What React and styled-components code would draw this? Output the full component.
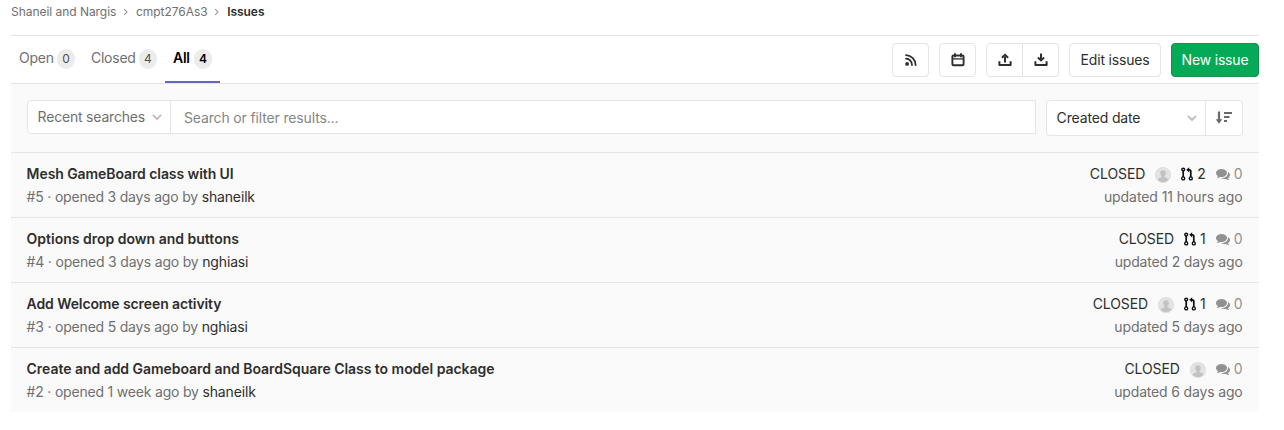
import React from 'react';
import styled, { createGlobalStyle } from 'styled-components';

const GlobalStyle = createGlobalStyle`
  * { box-sizing: border-box; }
  body {
    margin: 0;
    background: #fff;
    color: #2e2e2e;
    font-family: Inter, "Liberation Sans", sans-serif;
    font-size: 14px;
    line-height: 20px;
    -webkit-font-smoothing: antialiased;
  }
  svg { display: block; flex: none; }
`;

const Page = styled.main`
  width: 1248px;
  margin-left: 11px;
`;

const Breadcrumbs = styled.nav`
  display: flex;
  align-items: center;
  height: 36px;
  padding-bottom: 12px;
  border-bottom: 1px solid #e5e5e5;
  font-size: 12px;
  letter-spacing: -0.04px;
  color: #707070;
`;

const Crumb = styled.span`
  font-weight: ${(p) => (p.$current ? 600 : 400)};
  color: ${(p) => (p.$current ? '#2e2e2e' : 'inherit')};
`;

const CrumbArrow = styled.svg`
  margin: 0 7px 0 6.6px;
`;

const TopBar = styled.div`
  display: flex;
  justify-content: space-between;
  height: 48px;
  border-bottom: 1px solid #e5e5e5;
`;

const Tabs = styled.div`
  display: flex;
`;

const Tab = styled.div`
  display: flex;
  align-items: center;
  justify-content: space-between;
  height: 47px;
  width: ${(p) => p.$width}px;
  padding: 0 8px 3px;
  white-space: nowrap;
  letter-spacing: -0.25px;
  font-weight: ${(p) => (p.$active ? 600 : 400)};
  color: ${(p) => (p.$active ? '#000' : '#707070')};
  box-shadow: ${(p) => (p.$active ? 'inset 0 -2px 0 #6666c4' : 'none')};
`;

const Count = styled.span`
  width: 18px;
  height: 20px;
  border-radius: 10px;
  margin-top: 2px;
  background: #ececec;
  color: ${(p) => (p.$active ? '#000' : '#505050')};
  font-size: 12px;
  letter-spacing: 0;
  text-align: center;
`;

const Actions = styled.div`
  display: flex;
  gap: 10px;
  padding-top: 7px;
`;

const Button = styled.button`
  display: flex;
  align-items: center;
  justify-content: center;
  width: ${(p) => p.$width}px;
  height: 34px;
  padding: 0;
  border: 1px solid ${(p) => (p.$primary ? '#168f48' : '#e5e5e5')};
  border-radius: 4px;
  background: ${(p) => (p.$primary ? '#05aa57' : '#fff')};
  color: ${(p) => (p.$primary ? '#fff' : '#2e2e2e')};
  font: inherit;
  letter-spacing: -0.19px;
`;

const ButtonGroup = styled.div`
  display: flex;
  ${Button}:first-child { border-radius: 4px 0 0 4px; }
  ${Button}:last-child { border-radius: 0 4px 4px 0; border-left: 0; }
`;

const Panel = styled.section`
  background: #fafafa;
`;

const Filters = styled.div`
  display: flex;
  align-items: flex-start;
  gap: 10px;
  height: 68px;
  padding: 16px 16px 0;
`;

const SearchBox = styled.div`
  display: flex;
  flex: 1;
  height: 34px;
  border: 1px solid #e5e5e5;
  border-radius: 4px 0 0 4px;
  background: #fff;
`;

const Recent = styled.div`
  display: flex;
  align-items: center;
  justify-content: space-between;
  width: 143px;
  padding: 0 8px 0 9.6px;
  border-right: 1px solid #e5e5e5;
  color: #707070;
  letter-spacing: -0.2px;
  white-space: nowrap;
`;

const Placeholder = styled.div`
  padding: 7px 13px;
  color: #868686;
  letter-spacing: -0.15px;
`;

const Sort = styled.div`
  display: flex;
  width: 197px;
  height: 36px;
  border: 1px solid #e5e5e5;
  border-radius: 4px;
  background: #fff;
`;

const SortField = styled.div`
  display: flex;
  align-items: center;
  justify-content: space-between;
  flex: 1;
  padding: 0 8px 0 9.6px;
  letter-spacing: -0.15px;
`;

const SortDirection = styled.div`
  display: flex;
  align-items: center;
  justify-content: center;
  width: 37px;
  border-left: 1px solid #e5e5e5;
`;

const Issue = styled.article`
  display: flex;
  justify-content: space-between;
  height: 65px;
  padding: 11px 16.4px 0 15.6px;
  border-top: 1px solid #e5e5e5;
`;

const Line = styled.div`
  height: 23px;
  white-space: nowrap;
`;

const Title = styled(Line)`
  font-weight: 600;
  letter-spacing: ${(p) => p.$spacing}px;
`;

const Muted = styled(Line)`
  color: #707070;
  letter-spacing: -0.2px;
`;

const Updated = styled(Line)`
  color: #707070;
  text-align: right;
  letter-spacing: ${(p) => p.$spacing}px;
`;

const Author = styled.span`
  color: #2e2e2e;
  letter-spacing: -0.15px;
`;

const Meta = styled.div`
  display: flex;
  align-items: center;
  justify-content: flex-end;
  gap: 10px;
  height: 20px;
  margin-bottom: 3px;
`;

const Status = styled.span`
  letter-spacing: -0.1px;
`;

const Stat = styled.span`
  display: flex;
  align-items: center;
  gap: 4px;
  color: ${(p) => (p.$faint ? '#919191' : '#2e2e2e')};
`;

const AvatarImage = styled.svg`
  margin-top: 2px;
`;

const Chevron = () => (
  <svg width="10" height="8" viewBox="0 0 10 8" fill="none" stroke="#bfbfbf" strokeWidth="1.9" strokeLinecap="round" strokeLinejoin="round">
    <path d="M1.4 2.400 5 6 8.600 2.400" />
  </svg>
);

const Separator = () => (
  <CrumbArrow width="6" height="8" viewBox="0 0 6 8" fill="none" stroke="#999" strokeWidth="1.1">
    <path d="M1.2 1.2 4 4 1.2 6.8" />
  </CrumbArrow>
);

const RssIcon = () => (
  <svg width="16" height="16" viewBox="0 0 16 16" fill="none" stroke="#2e2e2e" strokeWidth="1.8">
    <circle cx="4.1" cy="11.9" r="1.9" fill="#2e2e2e" stroke="none" />
    <path d="M3 6.6A6.100 6.100 0 0 1 9 13M3 3.100A9.900 9.900 0 0 1 12.600 13" strokeLinecap="round" />
  </svg>
);

const CalendarIcon = () => (
  <svg width="16" height="16" viewBox="0 0 16 16" fill="none" stroke="#2e2e2e">
    <rect x="2.400" y="3.500" width="11.200" height="9.700" rx="1" strokeWidth="1.900" />
    <path d="M2.400 6.900h11.200" strokeWidth="1.300" />
    <path d="M5 2v2.500M11 2v2.500" strokeWidth="1.900" strokeLinecap="round" />
  </svg>
);

const TrayIcon = ({ down }) => (
  <svg width="16" height="16" viewBox="0 0 16 16" fill="none" stroke="#2e2e2e" strokeWidth="2">
    <path d="M2.400 9.200v3.900h11.200V9.200" strokeLinejoin="round" />
    {down ? <path d="M8 1.500v6" /> : <path d="M8 10.500v-6" />}
    {down ? (
      <path d="M4.900 5.500 8 8.500l3.100-3" strokeWidth="1.900" />
    ) : (
      <path d="M4.900 5.800 8 2.800l3.100 3" strokeWidth="1.900" />
    )}
  </svg>
);

const SortIcon = () => (
  <svg width="18" height="16" viewBox="0 0 18 16" fill="none" stroke="#6a6a6a" strokeWidth="2">
    <path d="M4 1.500v9.500" strokeWidth="2.200" />
    <path d="M.7 9.300h6.600L4 13.700z" fill="#6a6a6a" stroke="none" />
    <path d="M9 3h8M9 7h5.500M9 11h3" />
  </svg>
);

const MergeIcon = () => (
  <svg width="12" height="14" viewBox="0 0 12 14" fill="none" stroke="#111" strokeWidth="1.400">
    <circle cx="2.200" cy="2.600" r="1.400" />
    <circle cx="2.200" cy="11.400" r="1.500" />
    <circle cx="9.800" cy="11.400" r="1.500" />
    <path d="M2.200 4v6M9.800 9.900V4.500q0-1.700-1.700-1.700H7.500" strokeWidth="1.700" />
    <path d="M8.200.2v5.200L5.200 2.800z" fill="#111" stroke="none" />
  </svg>
);

const CommentsIcon = () => (
  <svg width="14" height="14" viewBox="0 0 1792 1792" fill="currentColor">
    <path d="M1408 768q0 139-94 257t-256.5 186.5-353.5 68.5q-86 0-176-16-124 88-278 128-36 9-86 16h-3q-11 0-20.5-8t-11.5-21q-1-3-1-6.5t.5-6.5 2-6l2.5-5 3.5-5.5 4-5 4.5-5 4-4.5q5-6 23-25t26-29.5 22.5-29 25-38.5 20.5-44q-124-72-195-177t-71-224q0-139 94-257t256.5-186.5 353.5-68.5 353.5 68.5 256.500 186.500 94 257zm384 256q0 120-71 224.500t-195 176.500q10 24 20.500 44t25 38.500 22.500 29 26 29.500 23 25q1 1 4 4.500t4.500 5 4 5 3.500 5.500l2.500 5 2 6 .5 6.500-1 6.500q-3 14-13 22t-22 7q-50-7-86-16-154-40-278-128-90 16-176 16-271 0-472-132 58 4 88 4 161 0 309-45t264-129q125-92 192-212t67-254q0-77-23-152 129 71 204 178t75 230z" />
  </svg>
);

const Avatar = () => (
  <AvatarImage width="16" height="16" viewBox="0 0 16 16">
    <circle cx="8" cy="8" r="7.700" fill="#e3e3e3" stroke="#d6d6d6" strokeWidth=".6" />
    <path d="M2.600 12.800c.5-1.600 2-1.900 3.500-2.400.7-.3.6-1 .1-1.600-1.600-2.200-1.500-5.600 1.800-5.600s3.400 3.400 1.800 5.600c-.5.6-.6 1.300.1 1.600 1.500.5 3 .8 3.500 2.400A7.200 7.200 0 0 1 2.600 12.800z" fill="#c2c2c2" />
  </AvatarImage>
);

const ISSUES = [
  { id: 5, title: 'Mesh GameBoard class with UI', spacing: -0.08, opened: '3 days ago', author: 'shaneilk', updated: '11 hours ago', updatedSpacing: -0.07, avatar: true, merges: 2 },
  { id: 4, title: 'Options drop down and buttons', spacing: 0, opened: '3 days ago', author: 'nghiasi', updated: '2 days ago', updatedSpacing: -0.18, merges: 1 },
  { id: 3, title: 'Add Welcome screen activity', spacing: -0.1, opened: '5 days ago', author: 'nghiasi', updated: '5 days ago', updatedSpacing: -0.16, avatar: true, merges: 1 },
  { id: 2, title: 'Create and add Gameboard and BoardSquare Class to model package', spacing: -0.04, opened: '1 week ago', author: 'shaneilk', updated: '6 days ago', updatedSpacing: -0.16, avatar: true },
];

export default function App() {
  return (
    <>
      <GlobalStyle />
      <Page>
        <Breadcrumbs>
          <Crumb>Shaneil and Nargis</Crumb>
          <Separator />
          <Crumb>cmpt276As3</Crumb>
          <Separator />
          <Crumb $current>Issues</Crumb>
        </Breadcrumbs>
        <TopBar>
          <Tabs>
            <Tab $width={72}>Open<Count>0</Count></Tab>
            <Tab $width={82}>Closed<Count>4</Count></Tab>
            <Tab $width={55} $active>All<Count $active>4</Count></Tab>
          </Tabs>
          <Actions>
            <Button $width={37} aria-label="Subscribe to RSS feed"><RssIcon /></Button>
            <Button $width={37} aria-label="Subscribe to calendar"><CalendarIcon /></Button>
            <ButtonGroup>
              <Button $width={37} aria-label="Import"><TrayIcon /></Button>
              <Button $width={36} aria-label="Export"><TrayIcon down /></Button>
            </ButtonGroup>
            <Button $width={92}>Edit issues</Button>
            <Button $width={88} $primary>New issue</Button>
          </Actions>
        </TopBar>
        <Panel>
          <Filters>
            <SearchBox>
              <Recent>Recent searches<Chevron /></Recent>
              <Placeholder>Search or filter results...</Placeholder>
            </SearchBox>
            <Sort>
              <SortField>Created date<Chevron /></SortField>
              <SortDirection><SortIcon /></SortDirection>
            </Sort>
          </Filters>
          {ISSUES.map((issue) => (
            <Issue key={issue.id}>
              <div>
                <Title $spacing={issue.spacing}>{issue.title}</Title>
                <Muted>#{issue.id} · opened {issue.opened} by <Author>{issue.author}</Author></Muted>
              </div>
              <div>
                <Meta>
                  <Status>CLOSED</Status>
                  {issue.avatar && <Avatar />}
                  {issue.merges && <Stat><MergeIcon />{issue.merges}</Stat>}
                  <Stat $faint><CommentsIcon />0</Stat>
                </Meta>
                <Updated $spacing={issue.updatedSpacing}>updated {issue.updated}</Updated>
              </div>
            </Issue>
          ))}
        </Panel>
      </Page>
    </>
  );
}
